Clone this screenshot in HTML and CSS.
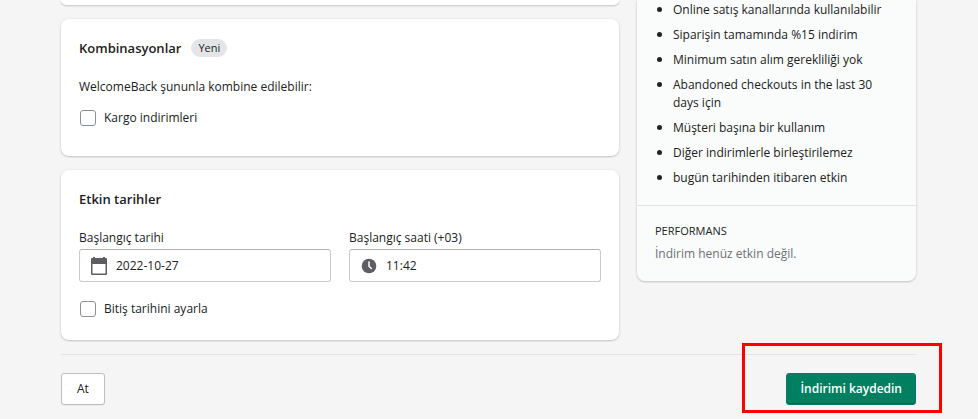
FILE: index.html
```html
<!DOCTYPE html>
<html lang="tr">
<head>
    <meta charset="UTF-8">
    <meta name="viewport" content="width=device-width, initial-scale=1.0">
    <title>İndirim</title>
    <link rel="stylesheet" href="styles.css">
</head>
<body>

    <div class="page">
        <div class="columns">
            <main class="main">
                <div class="card card-end"></div>

                <!-- Combinations -->
                <section class="card combinations">
                    <div class="card-header">
                        <h2>Kombinasyonlar</h2>
                        <span class="badge">Yeni</span>
                    </div>
                    <p class="lead"><strong>WelcomeBack</strong> şununla kombine edilebilir:</p>
                    <label class="choice">
                        <input type="checkbox">
                        <span>Kargo indirimleri</span>
                    </label>
                </section>

                <!-- Active dates -->
                <section class="card dates">
                    <div class="card-header">
                        <h2>Etkin tarihler</h2>
                    </div>
                    <div class="fields">
                        <div class="field">
                            <label for="start-date">Başlangıç tarihi</label>
                            <div class="text-field">
                                <svg class="icon" viewBox="0 0 18 18" aria-hidden="true">
                                    <path fill-rule="evenodd" d="M2 1h14a1 1 0 0 1 1 1v15a1 1 0 0 1-1 1H2a1 1 0 0 1-1-1V2a1 1 0 0 1 1-1zM2.500 7v9.500h13V7z"/>
                                    <path d="M3 0h2v2H3zM13 0h2v2h-2z"/>
                                </svg>
                                <input type="text" id="start-date" value="2022-10-27">
                            </div>
                        </div>
                        <div class="field">
                            <label for="start-time">Başlangıç saati (+03)</label>
                            <div class="text-field">
                                <svg class="icon" viewBox="0 0 18 18" aria-hidden="true">
                                    <circle cx="9" cy="9" r="7.300"/>
                                    <path class="hands" d="M9 5v4.300l2.300 2.200"/>
                                </svg>
                                <input type="text" id="start-time" value="11:42">
                            </div>
                        </div>
                    </div>
                    <label class="choice">
                        <input type="checkbox">
                        <span>Bitiş tarihini ayarla</span>
                    </label>
                </section>
            </main>

            <aside class="summary">
                <ul>
                    <li>Online satış kanallarında kullanılabilir</li>
                    <li>Siparişin tamamında %15 indirim</li>
                    <li>Minimum satın alım gerekliliği yok</li>
                    <li>Abandoned checkouts in the last 30 days için</li>
                    <li>Müşteri başına bir kullanım</li>
                    <li>Diğer indirimlerle birleştirilemez</li>
                    <li>bugün tarihinden itibaren etkin</li>
                </ul>
                <div class="performance">
                    <h3>PERFORMANS</h3>
                    <p>İndirim henüz etkin değil.</p>
                </div>
            </aside>
        </div>

        <footer class="actions">
            <button type="button" class="btn">At</button>
            <div class="save">
                <button type="submit" class="btn btn-primary">İndirimi kaydedin</button>
                <div class="highlight"></div>
            </div>
        </footer>
    </div>

</body>
</html>
```

FILE: styles.css
```css
* {
    box-sizing: border-box;
}
body {
    font-family: 'Segoe UI', 'Open Sans', 'Noto Sans', sans-serif;
    font-size: 12px;
    line-height: 18px;
    background-color: #f5f5f5;
    color: #202223;
    margin: 0;
}
h2, h3, p, ul {
    margin: 0;
}
.page {
    padding: 0 62px 13px 61px;
}
.columns {
    display: grid;
    grid-template-columns: 2fr 1fr;
    align-items: start;
    gap: 18px;
}
.main {
    display: flex;
    flex-direction: column;
    gap: 14px;
    min-width: 0;
}
.card,
.summary {
    background-color: #fff;
    border-radius: 8px;
    box-shadow: 0 0 4px rgba(23, 24, 24, 0.06), 0 1px 2px rgba(0, 0, 0, 0.18);
}
.card {
    padding: 20px 18px 22px;
}
.card-end {
    height: 5px;
    padding: 0;
    border-radius: 0 0 8px 8px;
}
.combinations {
    padding-bottom: 29px;
}
.card-header {
    display: flex;
    align-items: center;
    gap: 10px;
    margin-bottom: 21px;
}
h2 {
    font-size: 13px;
    font-weight: 600;
}
.badge {
    background-color: #e4e5e7;
    border-radius: 9px;
    padding: 0 7px;
    font-size: 11px;
}
.lead {
    margin-bottom: 13px;
}
.lead strong {
    font-weight: 500;
}

/* Form controls */
.choice {
    display: flex;
    align-items: center;
    gap: 8px;
}
.choice input {
    appearance: none;
    width: 16px;
    height: 16px;
    margin: 0 0 0 1px;
    background-color: #fff;
    border: 1px solid #8c9196;
    border-radius: 3px;
}
.choice input:checked {
    background-color: #008060;
}
.fields {
    display: grid;
    grid-template-columns: 1fr 1fr;
    gap: 18px;
    margin-bottom: 18px;
}
.field label {
    display: block;
    margin-bottom: 2px;
}
.text-field {
    display: flex;
    align-items: center;
    gap: 8px;
    height: 33px;
    padding: 0 10px;
    background-color: #fff;
    border: 1px solid #c9cccf;
    border-top-color: #aeb4b9;
    border-radius: 3px;
}
.text-field input {
    flex: 1;
    min-width: 0;
    padding: 0;
    border: none;
    outline: none;
    background: none;
    font: inherit;
    color: inherit;
}
.icon {
    width: 18px;
    height: 18px;
    flex-shrink: 0;
    fill: #5c5f62;
}
.hands {
    fill: none;
    stroke: #fff;
    stroke-width: 1.5;
    stroke-linecap: round;
}

/* Summary */
.summary {
    background-color: #fafbfb;
    border-radius: 0 0 8px 8px;
}
.summary ul {
    display: flex;
    flex-direction: column;
    gap: 7px;
    padding: 1px 18px 18px 20px;
    list-style: none;
}
.summary li {
    display: flex;
    gap: 11px;
}
.summary li::before {
    content: '';
    flex-shrink: 0;
    width: 5px;
    height: 5px;
    margin-top: 6px;
    border-radius: 50%;
    background-color: #202223;
}
.performance {
    border-top: 1px solid #e1e3e5;
    padding: 16px 18px 18px;
}
.performance h3 {
    font-size: 11px;
    font-weight: 400;
    margin-bottom: 5px;
}
.performance p {
    color: #6d7175;
}

/* Footer */
.actions {
    display: flex;
    justify-content: space-between;
    margin-top: 14px;
    padding-top: 18px;
    border-top: 1px solid #e1e3e5;
}
.btn {
    height: 32px;
    padding: 0 15px;
    background-color: #fff;
    border: 1px solid #babfc3;
    border-radius: 3px;
    box-shadow: 0 1px 0 rgba(0, 0, 0, 0.05);
    font: inherit;
    font-weight: 500;
    color: inherit;
    cursor: pointer;
}
.btn-primary {
    padding: 0 13px;
    background-color: #008060;
    border-color: #008060;
    box-shadow: inset 0 -1px 0 rgba(0, 0, 0, 0.2);
    font-weight: 600;
    color: #fff;
}
.save {
    position: relative;
}
.highlight {
    position: absolute;
    inset: -30px -26px -8px -44px;
    border: 3px solid #ff0000;
    pointer-events: none;
}
```
